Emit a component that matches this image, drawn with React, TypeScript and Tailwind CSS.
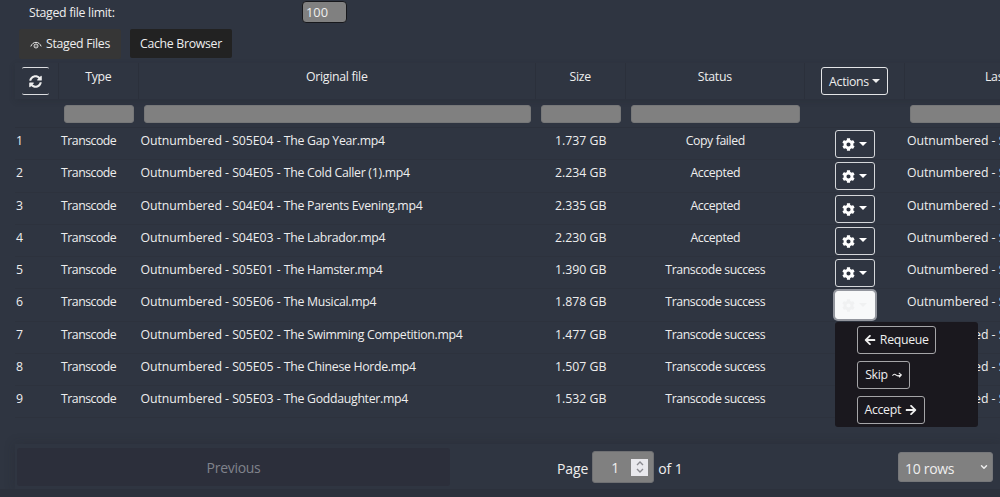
import React from 'react';
import { FaArrowLeft, FaArrowRight, FaCog } from 'react-icons/fa';
import { ChevronDown } from 'lucide-react';

const files = [
  { episode: 'S05E04', title: 'The Gap Year.mp4', size: '1.737 GB', status: 'Copy failed' },
  { episode: 'S04E05', title: 'The Cold Caller (1).mp4', size: '2.234 GB', status: 'Accepted' },
  { episode: 'S04E04', title: 'The Parents Evening.mp4', size: '2.335 GB', status: 'Accepted' },
  { episode: 'S04E03', title: 'The Labrador.mp4', size: '2.230 GB', status: 'Accepted' },
  { episode: 'S05E01', title: 'The Hamster.mp4', size: '1.390 GB', status: 'Transcode success' },
  { episode: 'S05E06', title: 'The Musical.mp4', size: '1.878 GB', status: 'Transcode success' },
  { episode: 'S05E02', title: 'The Swimming Competition.mp4', size: '1.477 GB', status: 'Transcode success' },
  { episode: 'S05E05', title: 'The Chinese Horde.mp4', size: '1.507 GB', status: 'Transcode success' },
  { episode: 'S05E03', title: 'The Goddaughter.mp4', size: '1.532 GB', status: 'Transcode success' },
];

const openRow = 5;

const columns = 'grid grid-cols-[44px_79.5px_397.5px_89.5px_179.5px_100px_220px] w-[1110px]';
const divider = 'border-r border-[#2b303b]';

const Caret = () => (
  <span className="inline-block border-x-4 border-t-4 border-x-transparent border-t-current mb-0.5" />
);

const EyeIcon = () => (
  <svg viewBox="0 0 12 10" className="w-3 h-2.5 mt-0.5" fill="none" stroke="currentColor">
    <path d="M0.8 6.4C3 1 9 1 11.2 6.4" strokeWidth="1" />
    <circle cx="6" cy="6" r="2" strokeWidth="0.9" />
    <circle cx="6" cy="6" r="0.6" fill="currentColor" stroke="none" />
  </svg>
);

const RefreshIcon = () => (
  <svg viewBox="0 0 512 512" className="w-[13px] h-[13px] mt-px" fill="currentColor">
    <path d="M370.7 133.3C339.5 104 298.9 88 255.8 88c-77.5.1-144.3 53.2-162.8 126.9-1.3 5.4-6.1 9.1-11.7 9.1H24.1c-7.5 0-13.2-6.8-11.8-14.2C33.9 94.9 134.8 8 256 8c66.4 0 126.8 26.1 171.3 68.7L463 41C478.1 25.9 504 36.6 504 57.9V192c0 13.3-10.7 24-24 24H345.9c-21.4 0-32.1-25.9-17-41l41.8-41.7zM32 296h134.1c21.4 0 32.1 25.9 17 41l-41.8 41.8c31.3 29.3 71.8 45.3 114.9 45.3 77.4-.1 144.3-53.1 162.8-126.8 1.3-5.4 6.1-9.1 11.7-9.1h57.3c7.5 0 13.2 6.8 11.8 14.2C478.1 417.1 377.2 504 256 504c-66.4 0-126.8-26.1-171.3-68.7L49 471C33.9 486.1 8 475.4 8 454.1V320c0-13.3 10.7-24 24-24z" />
  </svg>
);

const Filter = () => (
  <div className="h-[18px] mt-[6px] mx-[5px] rounded-[3px] bg-[#808080] border border-[#767778]" />
);

const FileName: React.FC<{ episode: string; title: string }> = ({ episode, title }) => (
  <div className="pl-[2px] pt-1 overflow-hidden">
    <span className="tracking-[-0.04px]">Outnumbered - {episode} - </span>
    {title}
  </div>
);

const MenuButton: React.FC<{ children: React.ReactNode; className: string }> = ({ children, className }) => (
  <button className={`flex items-center justify-center gap-1 h-7 rounded-[3px] border border-[#a5a5a8] ${className}`}>
    {children}
  </button>
);

const ActionsMenu = () => (
  <div className="absolute left-[0.5px] top-[31px] z-10 w-[142.5px] h-[105px] pl-[22px] pt-[4px] rounded-[3px] bg-[#1a181e] flex flex-col gap-[7px] items-start">
    <MenuButton className="w-[78.5px]">
      <FaArrowLeft className="w-3 h-3" />
      Requeue
    </MenuButton>
    <MenuButton className="w-[53px]">
      Skip
      <svg viewBox="0 0 10 8" className="w-2.5 h-2" fill="none" stroke="currentColor">
        <path d="M0.5 4.7C1.8 2.5 3 3 4.2 4.2S6.8 5 9 4M6.8 1.8L9.3 3.9L7.2 6.3" strokeWidth="1.1" />
      </svg>
    </MenuButton>
    <MenuButton className="w-[67.5px]">
      Accept
      <FaArrowRight className="w-3 h-3" />
    </MenuButton>
  </div>
);

export default function App() {
  return (
    <div className="w-[1000px] h-[497px] overflow-hidden bg-[#2f3541] text-[#eeeeee] text-[12.3px] leading-[18px] tracking-[-0.3px] font-['Open_Sans','Noto_Sans',sans-serif] flex flex-col whitespace-nowrap">
      <div className="flex pl-[29px] h-[29px] shrink-0">
        <span className="w-[273px] pt-1">Staged file limit:</span>
        <div className="w-[45px] h-[22px] mt-px rounded-[4px] bg-[#808080] border border-[#17181c] px-[3px] text-[12.8px] leading-[20px] tracking-normal">100</div>
      </div>

      <div className="flex gap-[9px] pl-[19px] h-[34px] shrink-0">
        <button className="w-[102px] h-[30px] rounded-[2px] bg-[#363636] flex items-center justify-center gap-1">
          <EyeIcon />
          Staged Files
        </button>
        <button className="w-[102px] h-[29px] pt-px rounded-[2px] bg-[#222222]">Cache Browser</button>
      </div>

      <div className="ml-[15px] h-[381px] shrink-0">
        {/* Column titles */}
        <div className={`${columns} h-[36px] text-center shadow-[0_2px_6px_rgba(30,33,40,0.2)]`}>
          <div className={`${divider} pt-1`}>
            <button className="ml-[-2px] w-[27px] h-[28px] rounded-[2px] border-y border-[#dcdde0] inline-flex items-center justify-center">
              <RefreshIcon />
            </button>
          </div>
          <div className={`${divider} pt-[5px]`}>Type</div>
          <div className={`${divider} pt-[5px]`}>Original file</div>
          <div className={`${divider} pt-[5px]`}>Size</div>
          <div className={`${divider} pt-[5px]`}>Status</div>
          <div className={`${divider} pt-1`}>
            <button className="w-[67px] h-[28px] pt-px rounded-[3px] border border-[#e4e5e7] inline-flex items-center justify-center gap-[3px]">
              Actions
              <Caret />
            </button>
          </div>
          <div className="pt-[5px] pl-[80px] text-left">Last updated</div>
        </div>

        {/* Column filters */}
        <div className={`${columns} h-[29px] border-b border-[#2c313c]`}>
          <div />
          <Filter />
          <Filter />
          <Filter />
          <Filter />
          <div />
          <Filter />
        </div>

        {files.map((file, idx) => (
          <div key={file.episode} className={`${columns} h-[32.25px] border-b border-[#2d323d]`}>
            <div className="pl-px pt-1">{idx + 1}</div>
            <div className="pl-[2px] pt-1 tracking-[-0.5px]">Transcode</div>
            <FileName episode={file.episode} title={file.title} />
            <div className="pt-1 text-center tracking-normal">{file.size}</div>
            <div className="pt-1 text-center tracking-[-0.4px]">{file.status}</div>
            <div className="pl-[29.5px] pt-[2px]">
              <div className="relative w-[40px]">
                <button
                  className={`w-[40px] h-[28px] rounded-[3px] border flex items-center justify-center gap-1 pt-px ${
                    idx === openRow
                      ? 'bg-[#f8f9fa] border-[#f8f9fa] text-[#f0f1f2] ring-2 ring-[#93969e]'
                      : 'border-[#d5d7da] text-white'
                  }`}
                >
                  <FaCog className="w-[13px] h-[13px]" />
                  <Caret />
                </button>
                {idx === openRow && <ActionsMenu />}
              </div>
            </div>
            <FileName episode={file.episode} title={file.title} />
          </div>
        ))}
      </div>

      {/* Pagination */}
      <div className="ml-[15px] h-[45px] pt-px shrink-0 flex items-center text-[14px] shadow-[0_0_10px_rgba(30,33,40,0.25)]">
        <button className="ml-[2px] w-[433px] h-[38px] pt-0.5 rounded-[3px] bg-[#2c2f3b] text-[#80838b]">Previous</button>
        <div className="ml-[107px] flex items-center tracking-[-0.1px]">
          <span className="pt-[3px]">Page</span>
          <div className="ml-[4px] mr-[4px] w-[62px] h-[32px] rounded-[3px] bg-[#808080] border border-[#6f7073] flex items-center">
            <span className="ml-[18px] w-[20px] pt-[2px]">1</span>
            <span className="w-[17px] h-[17px] bg-[#e9e9ed] flex items-center justify-center">
              <svg viewBox="0 0 8 12" className="w-2 h-3" fill="none" stroke="#8a8a90" strokeWidth="1.4">
                <path d="M1 4L4 1L7 4M1 8L4 11L7 8" />
              </svg>
            </span>
          </div>
          <span className="pt-[3px]">of 1</span>
        </div>
        <div className="ml-auto mr-[7px] w-[95px] h-[30px] rounded-[3px] bg-[#808080] border border-[#76777a] flex items-center justify-between pl-[6px] pr-[3px]">
          <span className="pt-[3px]">10 rows</span>
          <ChevronDown className="w-[10px] h-[10px]" strokeWidth={3.5} />
        </div>
      </div>
      <div className="h-[8px] bg-[#2c313c]" />
    </div>
  );
}
